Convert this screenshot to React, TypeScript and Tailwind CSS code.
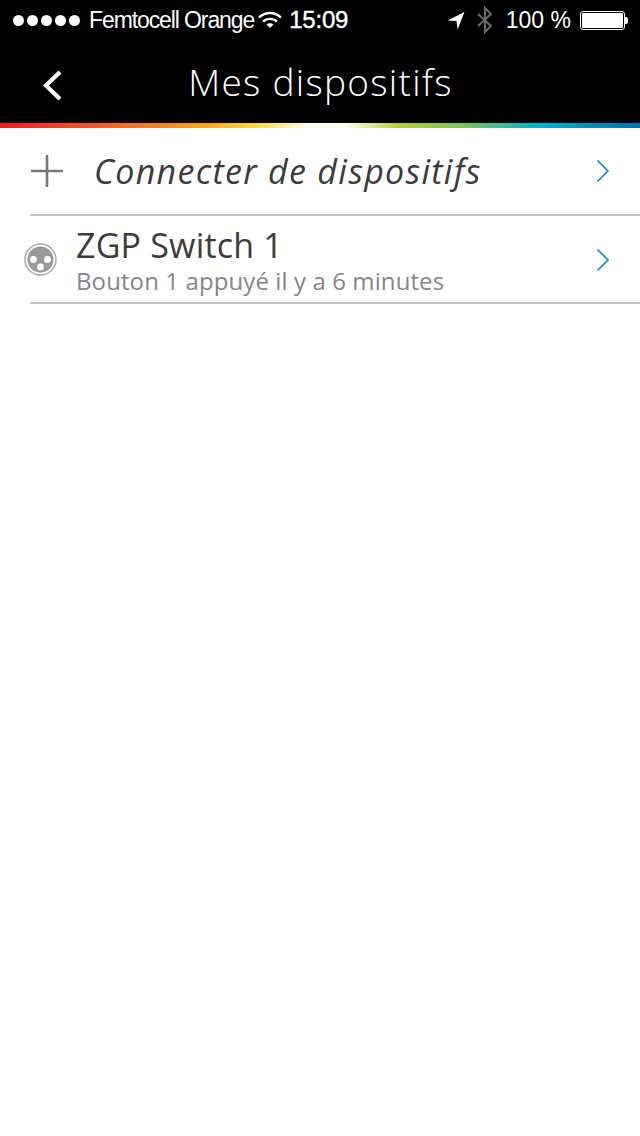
function Chevron() {
  return (
    <svg width="14" height="24" viewBox="0 0 14 24" fill="none" className="text-[#0b8fcb]">
      <path d="M1.5 1.5L12 12L1.5 22.5" stroke="currentColor" strokeWidth="1.7" />
    </svg>
  );
}

function StatusBar() {
  return (
    <div className="h-10 flex items-center pl-[13px] pr-[12px] text-white font-['Liberation_Sans',sans-serif]">
      <div className="flex gap-[3px]">
        {[0, 1, 2, 3, 4].map((i) => (
          <div key={i} className="w-[11px] h-[11px] rounded-full bg-white" />
        ))}
      </div>
      <span className="ml-[9px] text-[23px] tracking-[-1.1px]">Femtocell Orange</span>
      <svg width="26" height="20" viewBox="0 0 26 20" className="ml-[3px]" fill="none" stroke="#fff">
        <path d="M2 7.5C8.5 1.5 17.5 1.5 24 7.5" strokeWidth="2.4" />
        <path d="M6 11.5C10 8 16 8 20 11.5" strokeWidth="2.4" />
        <path d="M9.5 14.5L13 18L16.5 14.5C14.5 12.8 11.5 12.8 9.5 14.5Z" fill="#fff" stroke="none" />
      </svg>
      <span className="ml-[6px] text-[24px] [-webkit-text-stroke:0.4px_white] tracking-[-0.2px]">15:09</span>
      <svg width="20" height="20" viewBox="0 0 20 20" className="ml-auto -mt-[1px]">
        <path d="M18.5 2L1.5 10.5L10.5 11L11.5 19.5Z" fill="#fff" />
      </svg>
      <svg width="18" height="28" viewBox="0 0 18 28" fill="none" stroke="#6b6b6b" strokeWidth="2" className="ml-[10px] -mt-[1px]">
        <path d="M2 8L15 20L9 26V2L15 8L2 20" />
      </svg>
      <span className="ml-[12px] text-[23px]">100 %</span>
      <div className="ml-[9px] flex items-center">
        <div className="w-[45px] h-[19px] border border-white rounded-[3px] p-[1px]">
          <div className="w-full h-full bg-white rounded-[1px]" />
        </div>
        <div className="w-[3px] h-[7px] bg-white rounded-r-[2px]" />
      </div>
    </div>
  );
}

export default function App() {
  return (
    <div className="w-[640px] h-[1136px] bg-white font-['Open_Sans','Liberation_Sans',sans-serif]">
      <div className="bg-black h-[123px]">
        <StatusBar />
        <div className="relative h-[83px] flex items-center justify-center">
          <svg width="22" height="34" viewBox="0 0 22 34" fill="none" className="absolute left-[42px] top-[29px]">
            <path d="M18 3L4 16.5L18 30" stroke="#fff" strokeWidth="4.2" />
          </svg>
          <span className="text-white text-[37px] leading-[50px] font-light tracking-[1.3px] ml-[1px]">Mes dispositifs</span>
        </div>
      </div>
      <div className="h-[5px] bg-[linear-gradient(to_right,#ed1c24_0%,#f26522_18%,#f9a51a_32%,#fdd835_40%,#fffdf0_48%,#fffdf0_54%,#b5d334_62%,#7fc455_72%,#00b4d0_84%,#0071ad_100%)]" />
      <div className="h-[86px] flex items-center pl-[30px] pr-[30px]">
        <svg width="34" height="34" viewBox="0 0 34 34" className="shrink-0" fill="none" stroke="#777" strokeWidth="2.6">
          <path d="M1 17H33M17 1V33" />
        </svg>
        <span className="ml-[30px] text-[34px] leading-[46px] italic text-[#3c3c3c] tracking-[1.3px]">Connecter de dispositifs</span>
        <div className="ml-auto"><Chevron /></div>
      </div>
      <div className="ml-[30px] h-[2px] bg-[#c4c4c4]" />
      <div className="h-[86px] flex items-center pl-[24px] pr-[30px]">
        <svg width="33" height="33" viewBox="0 0 33 33" className="shrink-0 mt-[1px]">
          <circle cx="16.5" cy="16.5" r="15.5" fill="none" stroke="#aaa" strokeWidth="1.5" />
          <circle cx="16.5" cy="16.5" r="13" fill="#999" />
          <circle cx="9.5" cy="16.5" r="3.4" fill="#fff" />
          <circle cx="23.5" cy="16.5" r="3.4" fill="#fff" />
          <circle cx="16.5" cy="24" r="3.4" fill="#fff" />
        </svg>
        <div className="ml-[19px] pt-[8px] flex flex-col">
          <span className="text-[34px] leading-[36px] text-[#3c3c3c] tracking-[0.2px]">ZGP Switch 1</span>
          <span className="text-[24px] leading-[36px] text-[#868686] tracking-[0.1px]">Bouton 1 appuyé il y a 6 minutes</span>
        </div>
        <div className="ml-auto mt-[1px]"><Chevron /></div>
      </div>
      <div className="ml-[30px] h-[2px] bg-[#c4c4c4]" />
    </div>
  );
}
